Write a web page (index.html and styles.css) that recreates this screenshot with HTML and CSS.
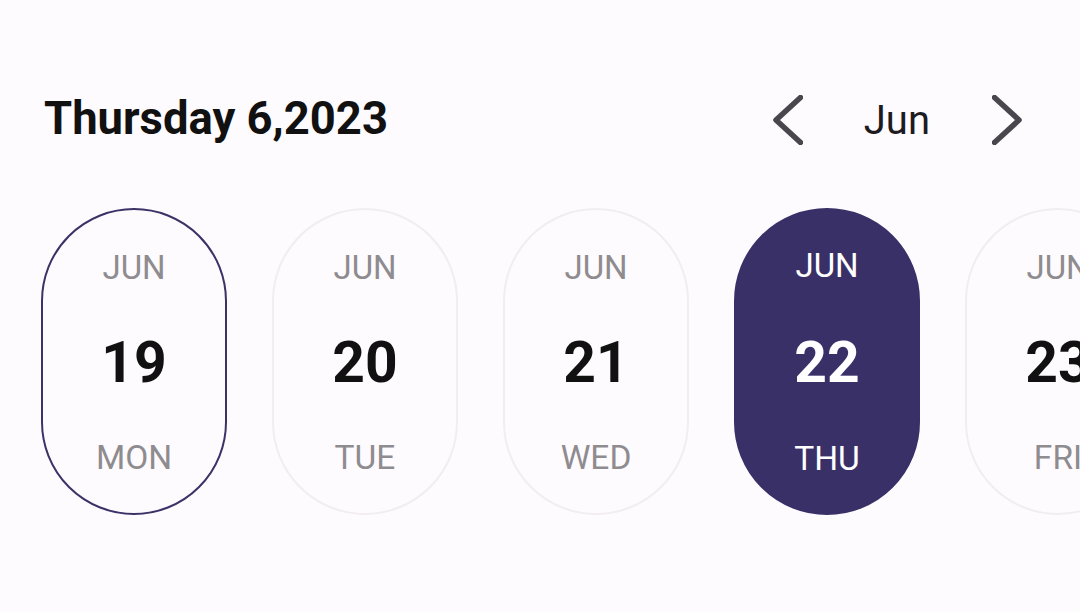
FILE: index.html
```html
<!DOCTYPE html>
<html>
<head>
<meta charset="utf-8">
<link rel="stylesheet" href="styles.css">
</head>
<body>
<div class="page">
  <header class="header">
    <h1 class="title">Thursday 6,2023</h1>
    <div class="month-nav">
      <svg class="chev" width="30" height="50" viewBox="0 0 30 50"><path d="M27.5 2.5 L3 25 L27.5 47.5" /></svg>
      <span class="month">Jun</span>
      <svg class="chev" width="30" height="50" viewBox="0 0 30 50"><path d="M2.5 2.5 L27 25 L2.5 47.5" /></svg>
    </div>
  </header>
  <div class="days">
    <div class="day outlined"><span class="mon">JUN</span><span class="num">19</span><span class="wd">MON</span></div>
    <div class="day"><span class="mon">JUN</span><span class="num">20</span><span class="wd">TUE</span></div>
    <div class="day"><span class="mon">JUN</span><span class="num">21</span><span class="wd">WED</span></div>
    <div class="day selected"><span class="mon">JUN</span><span class="num">22</span><span class="wd">THU</span></div>
    <div class="day"><span class="mon">JUN</span><span class="num">23</span><span class="wd">FRI</span></div>
  </div>
</div>
</body>
</html>
```

FILE: styles.css
```css
html, body {
  margin: 0;
  padding: 0;
  background: #fefbfe;
  font-family: Roboto, "Liberation Sans", sans-serif;
  width: 1080px;
  height: 612px;
  overflow: hidden;
}
.page {
  padding: 80px 0 0 41px;
}
.header {
  height: 80px;
  display: flex;
  align-items: center;
  justify-content: space-between;
  padding-right: 58px;
}
.title {
  margin: -4px 0 0 3px;
  font-size: 45.4px;
  font-weight: 700;
  color: #121112;
  letter-spacing: 0;
}
.month-nav {
  display: flex;
  align-items: center;
}
.chev path {
  fill: none;
  stroke: #4a464e;
  stroke-width: 5.5;
  stroke-linecap: round;
  stroke-linejoin: round;
}
.month {
  font-size: 40px;
  color: #1d1b1f;
  margin: 0 62px 0 61px;
}
.days {
  margin-top: 48px;
  display: flex;
  gap: 45px;
  overflow: hidden;
}
.day {
  flex: 0 0 auto;
  box-sizing: border-box;
  width: 186px;
  height: 307px;
  border-radius: 93px;
  border: 2px solid #f1edf1;
  display: flex;
  flex-direction: column;
  align-items: center;
  padding-top: 36px;
}
.day.outlined {
  border: 2.5px solid #3b3266;
  padding-top: 35.5px;
}
.day.selected {
  background: #393068;
  border-color: #393068;
  padding-top: 34px;
}
.mon, .wd {
  font-size: 33px;
  color: #8f8c90;
  line-height: 44px;
}
.wd {
  font-size: 33.5px;
}
.num {
  font-size: 57px;
  font-weight: 700;
  color: #121112;
  line-height: 64px;
  margin: 41px 0 41px;
}
.selected .num {
  margin: 43px 0 42px;
}
.selected .mon, .selected .wd, .selected .num {
  color: #ffffff;
}
```
